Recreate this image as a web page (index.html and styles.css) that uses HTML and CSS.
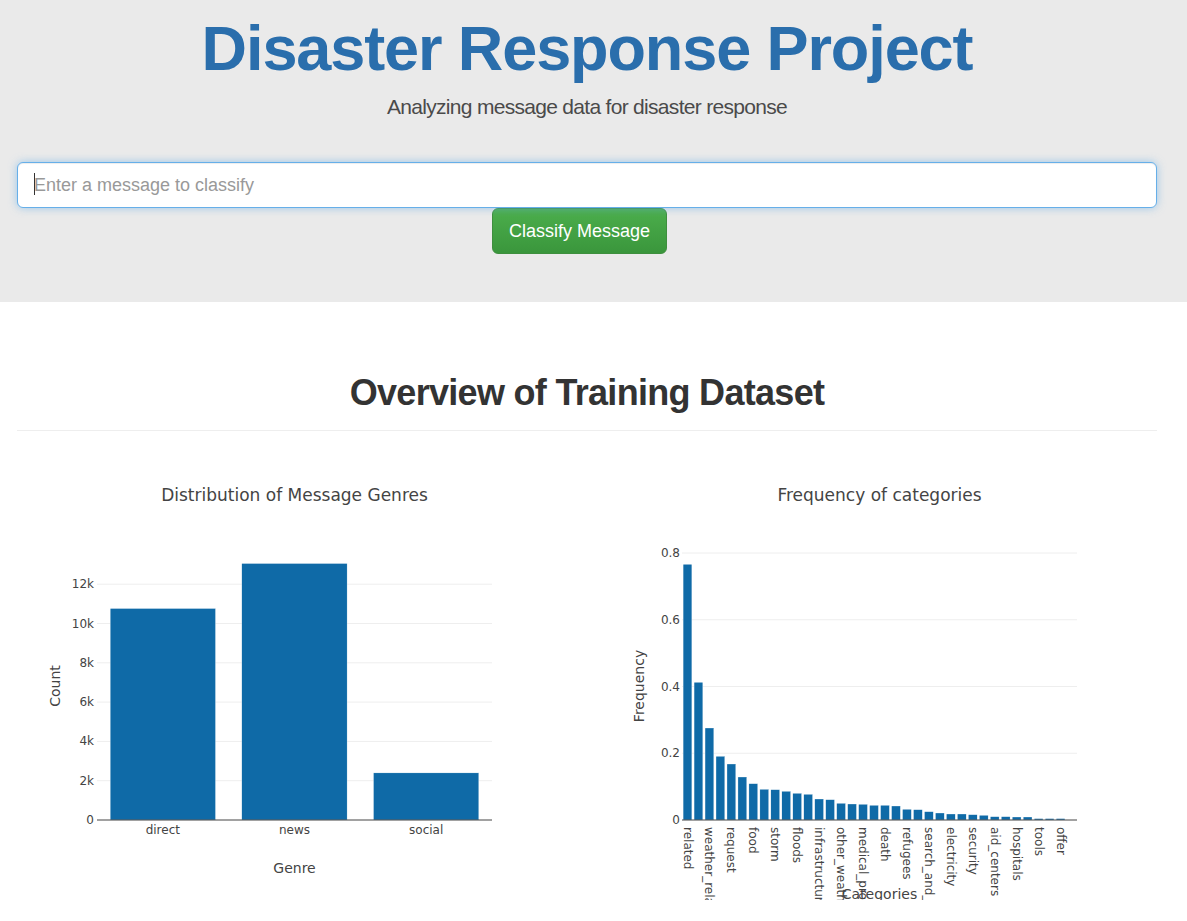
FILE: index.html
```html
<!DOCTYPE html>
<html lang="en">
<head>
<meta charset="utf-8">
<title>Disaster Response Project</title>
<link rel="stylesheet" href="styles.css">
</head>
<body>
<header class="jumbotron">
  <div class="container">
    <h1 class="title">Disaster Response Project</h1>
    <p class="subtitle">Analyzing message data for disaster response</p>
    <form class="classify-form">
      <div class="search">
        <input class="msg-input" type="text" placeholder="Enter a message to classify">
        <span class="caret"></span>
      </div>
      <div class="actions">
        <button class="btn-classify" type="button">Classify Message</button>
      </div>
    </form>
  </div>
</header>

<main class="container overview">
  <h2 class="overview-title">Overview of Training Dataset</h2>
  <hr class="divider">
  <div class="charts">
    <div class="chart">
      <svg class="plot" width="555" height="450" viewBox="0 0 555 450">
        <text class="plot-title" x="277.5" y="51" text-anchor="middle">Distribution of Message Genres</text>
        <g class="grid">
          <line x1="80" x2="475" y1="330.7" y2="330.7"/>
          <line x1="80" x2="475" y1="291.4" y2="291.4"/>
          <line x1="80" x2="475" y1="252.1" y2="252.1"/>
          <line x1="80" x2="475" y1="212.8" y2="212.8"/>
          <line x1="80" x2="475" y1="173.5" y2="173.5"/>
          <line x1="80" x2="475" y1="134.2" y2="134.2"/>
        </g>
        <g class="bars">
          <rect x="93.2" y="158.5" width="105.3" height="211.5"/>
          <rect x="224.8" y="113.5" width="105.3" height="256.5"/>
          <rect x="356.5" y="322.9" width="105.3" height="47.1"/>
        </g>
        <line class="zeroline" x1="80" x2="475" y1="370" y2="370"/>
        <g class="ticks" text-anchor="end">
          <text x="77" y="374">0</text>
          <text x="77" y="334.7">2k</text>
          <text x="77" y="295.4">4k</text>
          <text x="77" y="256.1">6k</text>
          <text x="77" y="216.8">8k</text>
          <text x="77" y="177.5">10k</text>
          <text x="77" y="138.2">12k</text>
        </g>
        <g class="ticks" text-anchor="middle">
          <text x="145.8" y="383.5">direct</text>
          <text x="277.5" y="383.5">news</text>
          <text x="409.2" y="383.5">social</text>
        </g>
        <text class="axis-title" x="277.5" y="423" text-anchor="middle">Genre</text>
        <text class="axis-title" transform="translate(43,236) rotate(-90)" text-anchor="middle">Count</text>
      </svg>
    </div>
    <div class="chart">
      <svg class="plot" width="555" height="450" viewBox="0 0 555 450">
        <text class="plot-title" x="277.5" y="51" text-anchor="middle">Frequency of categories</text>
        <g class="grid">
          <line x1="80" x2="475" y1="303.25" y2="303.25"/>
          <line x1="80" x2="475" y1="236.5" y2="236.5"/>
          <line x1="80" x2="475" y1="169.75" y2="169.75"/>
          <line x1="80" x2="475" y1="103" y2="103"/>
        </g>
        <g class="bars">
          <rect x="81.10" y="114.3" width="8.78" height="255.7"/>
          <rect x="92.07" y="232.3" width="8.78" height="137.7"/>
          <rect x="103.04" y="278" width="8.78" height="92"/>
          <rect x="114.01" y="306.3" width="8.78" height="63.7"/>
          <rect x="124.99" y="314" width="8.78" height="56"/>
          <rect x="135.96" y="327" width="8.78" height="43"/>
          <rect x="146.93" y="333.7" width="8.78" height="36.3"/>
          <rect x="157.90" y="339.3" width="8.78" height="30.7"/>
          <rect x="168.87" y="339.7" width="8.78" height="30.3"/>
          <rect x="179.85" y="341.3" width="8.78" height="28.7"/>
          <rect x="190.82" y="343.3" width="8.78" height="26.7"/>
          <rect x="201.79" y="344.3" width="8.78" height="25.7"/>
          <rect x="212.76" y="349" width="8.78" height="21"/>
          <rect x="223.73" y="349.7" width="8.78" height="20.3"/>
          <rect x="234.71" y="353.3" width="8.78" height="16.7"/>
          <rect x="245.68" y="354" width="8.78" height="16"/>
          <rect x="256.65" y="354.3" width="8.78" height="15.7"/>
          <rect x="267.62" y="355.3" width="8.78" height="14.7"/>
          <rect x="278.59" y="355.3" width="8.78" height="14.7"/>
          <rect x="289.57" y="356" width="8.78" height="14"/>
          <rect x="300.54" y="359.3" width="8.78" height="10.7"/>
          <rect x="311.51" y="359.7" width="8.78" height="10.3"/>
          <rect x="322.48" y="361.7" width="8.78" height="8.3"/>
          <rect x="333.45" y="363" width="8.78" height="7"/>
          <rect x="344.43" y="364" width="8.78" height="6"/>
          <rect x="355.40" y="364" width="8.78" height="6"/>
          <rect x="366.37" y="364.7" width="8.78" height="5.3"/>
          <rect x="377.34" y="365.3" width="8.78" height="4.7"/>
          <rect x="388.31" y="366.7" width="8.78" height="3.3"/>
          <rect x="399.29" y="366.7" width="8.78" height="3.3"/>
          <rect x="410.26" y="367" width="8.78" height="3"/>
          <rect x="421.23" y="367" width="8.78" height="3"/>
          <rect x="432.20" y="368.6" width="8.78" height="1.4"/>
          <rect x="443.17" y="368.6" width="8.78" height="1.4"/>
          <rect x="454.15" y="368.6" width="8.78" height="1.4"/>
        </g>
        <line class="zeroline" x1="80" x2="475" y1="370" y2="370"/>
        <g class="ticks" text-anchor="end">
          <text x="78" y="374">0</text>
          <text x="78" y="307.3">0.2</text>
          <text x="78" y="240.5">0.4</text>
          <text x="78" y="173.8">0.6</text>
          <text x="78" y="107">0.8</text>
        </g>
        <g class="ticks">
          <text transform="translate(81.5,377) rotate(90)">related</text>
          <text transform="translate(103.4,377) rotate(90)">weather_related</text>
          <text transform="translate(125.4,377) rotate(90)">request</text>
          <text transform="translate(147.3,377) rotate(90)">food</text>
          <text transform="translate(169.3,377) rotate(90)">storm</text>
          <text transform="translate(191.2,377) rotate(90)">floods</text>
          <text transform="translate(213.2,377) rotate(90)">infrastructure_related</text>
          <text transform="translate(235.1,377) rotate(90)">other_weather</text>
          <text transform="translate(257.0,377) rotate(90)">medical_products</text>
          <text transform="translate(279.0,377) rotate(90)">death</text>
          <text transform="translate(300.9,377) rotate(90)">refugees</text>
          <text transform="translate(322.9,377) rotate(90)">search_and_rescue</text>
          <text transform="translate(344.8,377) rotate(90)">electricity</text>
          <text transform="translate(366.8,377) rotate(90)">security</text>
          <text transform="translate(388.7,377) rotate(90)">aid_centers</text>
          <text transform="translate(410.6,377) rotate(90)">hospitals</text>
          <text transform="translate(432.6,377) rotate(90)">tools</text>
          <text transform="translate(454.5,377) rotate(90)">offer</text>
        </g>
        <text class="axis-title" x="277.5" y="449" text-anchor="middle">Categories</text>
        <text class="axis-title" transform="translate(42,236) rotate(-90)" text-anchor="middle">Frequency</text>
      </svg>
    </div>
  </div>
</main>
</body>
</html>
```
FILE: styles.css
```css
* { box-sizing: border-box; }

html, body {
  margin: 0;
  padding: 0;
  background: #fff;
  font-family: "Liberation Sans", Arial, sans-serif;
  color: #333;
}

.container {
  width: 1140px;
  margin-left: 17px;
}

.jumbotron {
  background: #eaeaea;
  padding: 13px 0 48px;
}

.title {
  margin: 0;
  font-size: 63px;
  line-height: 70px;
  font-weight: 700;
  letter-spacing: -1.1px;
  color: #2a6eac;
  text-align: center;
}

.subtitle {
  margin: 9px 0 0;
  font-size: 21px;
  line-height: 30px;
  letter-spacing: -0.7px;
  color: #4a4a4a;
  text-align: center;
}

.classify-form {
  margin: 40px 0 0;
}

.search {
  position: relative;
}

.msg-input {
  display: block;
  width: 100%;
  height: 46px;
  padding: 10px 16px;
  font-family: "Liberation Sans", Arial, sans-serif;
  font-size: 18px;
  color: #555;
  background: #fff;
  border: 1px solid #66afe9;
  border-radius: 6px;
  outline: none;
  box-shadow: inset 0 1px 1px rgba(0, 0, 0, .075), 0 0 8px rgba(102, 175, 233, .6);
}

.msg-input::placeholder {
  color: #999;
}

.caret {
  position: absolute;
  left: 17px;
  top: 11px;
  width: 1px;
  height: 22px;
  background: #333;
}

.actions {
  display: flex;
  justify-content: center;
  padding-right: 15px;
}

.btn-classify {
  height: 46px;
  padding: 10px 16px;
  font-family: "Liberation Sans", Arial, sans-serif;
  font-size: 18px;
  line-height: 24px;
  color: #fff;
  background: linear-gradient(to bottom, #4cae4c 0%, #3a963c 100%);
  border: 1px solid #3e8f3e;
  border-radius: 6px;
  cursor: pointer;
}

.overview {
  padding-top: 71px;
}

.overview-title {
  margin: 0;
  font-size: 36px;
  line-height: 40px;
  font-weight: 700;
  letter-spacing: -0.7px;
  color: #333;
  text-align: center;
}

.divider {
  margin: 17px 0 19px;
  border: 0;
  border-top: 1px solid #eee;
  height: 0;
}

.charts {
  display: grid;
  grid-template-columns: 555px 555px;
  column-gap: 30px;
}

.chart {
  height: 450px;
}

.plot {
  display: block;
  overflow: visible;
  font-family: "DejaVu Sans", Verdana, sans-serif;
}

.plot-title {
  font-size: 17px;
  fill: #444;
}

.grid line {
  stroke: #eee;
  stroke-width: 1;
}

.bars rect {
  fill: #0f6aa7;
  stroke: #fff;
  stroke-width: 0.3;
}

.zeroline {
  stroke: #444;
  stroke-width: 1;
}

.ticks text {
  font-size: 12px;
  fill: #444;
}

.axis-title {
  font-size: 14px;
  fill: #444;
}
```
